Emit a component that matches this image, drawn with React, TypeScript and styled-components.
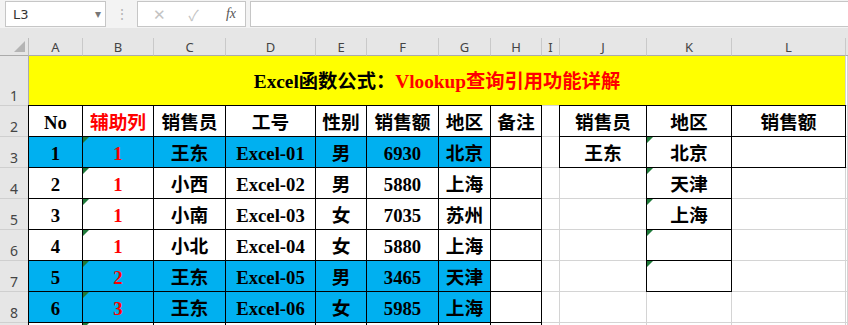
import React from 'react';
import styled, { createGlobalStyle, css } from 'styled-components';

const GlobalStyle = createGlobalStyle`
  html, body {
    margin: 0;
    padding: 0;
    background: #ffffff;
  }
  body {
    font-family: "Noto Sans", "Noto Sans CJK SC", sans-serif;
  }
`;

const COLS = ['A', 'B', 'C', 'D', 'E', 'F', 'G', 'H', 'I', 'J', 'K', 'L', ''];

type Row = {
  no: string;
  aux: string;
  name: string;
  id: string;
  sex: string;
  amount: string;
  area: string;
  blue: boolean;
};

const rows: Row[] = [
  { no: '1', aux: '1', name: '王东', id: 'Excel-01', sex: '男', amount: '6930', area: '北京', blue: true },
  { no: '2', aux: '1', name: '小西', id: 'Excel-02', sex: '男', amount: '5880', area: '上海', blue: false },
  { no: '3', aux: '1', name: '小南', id: 'Excel-03', sex: '女', amount: '7035', area: '苏州', blue: false },
  { no: '4', aux: '1', name: '小北', id: 'Excel-04', sex: '女', amount: '5880', area: '上海', blue: false },
  { no: '5', aux: '2', name: '王东', id: 'Excel-05', sex: '男', amount: '3465', area: '天津', blue: true },
  { no: '6', aux: '3', name: '王东', id: 'Excel-06', sex: '女', amount: '5985', area: '上海', blue: true },
];

// right lookup block, rows 3..9 (index 0 = row 3)
const lookup = [
  { j: '王东', k: '北京', jBox: true, kBox: true, lBox: true },
  { j: '', k: '天津', jBox: false, kBox: true, lBox: false },
  { j: '', k: '上海', jBox: false, kBox: true, lBox: false },
  { j: '', k: '', jBox: false, kBox: true, lBox: false },
  { j: '', k: '', jBox: false, kBox: true, lBox: false },
  { j: '', k: '', jBox: false, kBox: false, lBox: false },
  { j: '', k: '', jBox: false, kBox: false, lBox: false },
];

export default function App() {
  return (
    <>
      <GlobalStyle />
      <Window>
        <FormulaBar>
          <NameBox>
            <span>L3</span>
            <Caret>▾</Caret>
          </NameBox>
          <Dots>⋮</Dots>
          <FxBox>
            <FxButton>✕</FxButton>
            <FxButton>✓</FxButton>
            <FxLabel>fx</FxLabel>
          </FxBox>
          <FormulaInput />
        </FormulaBar>
        <Band />
        <Grid>
          <Corner>
            <CornerMark />
          </Corner>
          {COLS.map((c, i) => (
            <ColHead key={i} $last={i === COLS.length - 1}>
              {c}
            </ColHead>
          ))}

          <RowHead>1</RowHead>
          <TitleCell>
            Excel函数公式：<Red>Vlookup查询引用功能详解</Red>
          </TitleCell>
          <Cell />

          <RowHead>2</RowHead>
          <Cell $boxed>No</Cell>
          <Cell $boxed $red>辅助列</Cell>
          <Cell $boxed>销售员</Cell>
          <Cell $boxed>工号</Cell>
          <Cell $boxed>性别</Cell>
          <Cell $boxed>销售额</Cell>
          <Cell $boxed>地区</Cell>
          <Cell $boxed>备注</Cell>
          <Cell />
          <Cell $boxed>销售员</Cell>
          <Cell $boxed>地区</Cell>
          <Cell $boxed>销售额</Cell>
          <Cell />

          {[...rows, null].map((r, i) => {
            const lk = lookup[i];
            const bg = r && r.blue ? '#00b0f0' : undefined;
            return (
              <React.Fragment key={i}>
                {/* row 9 only peeks in at the bottom, its number stays hidden */}
                <RowHead>{r ? i + 3 : ''}</RowHead>
                <Cell $boxed $bg={bg}>{r?.no}</Cell>
                <Cell $boxed $bg={bg} $red $flag>{r?.aux}</Cell>
                <Cell $boxed $bg={bg}>{r?.name}</Cell>
                <Cell $boxed $bg={bg}>{r?.id}</Cell>
                <Cell $boxed $bg={bg}>{r?.sex}</Cell>
                <Cell $boxed $bg={bg}>{r?.amount}</Cell>
                <Cell $boxed $bg={bg}>{r?.area}</Cell>
                <Cell $boxed />
                <Cell />
                <Cell $boxed={lk.jBox}>{lk.j}</Cell>
                <Cell $boxed={lk.kBox} $flag={lk.kBox}>{lk.k}</Cell>
                <Cell $boxed={lk.lBox} />
                <Cell />
              </React.Fragment>
            );
          })}
        </Grid>
      </Window>
    </>
  );
}

const Window = styled.div`
  width: 848px;
  height: 325px;
  overflow: hidden;
  background: #ffffff;
`;

const FormulaBar = styled.div`
  display: flex;
  align-items: flex-start;
  height: 28px;
  background: #f3f3f3;
`;

const boxStyles = css`
  box-sizing: border-box;
  height: 26px;
  margin-top: 1px;
  background: #ffffff;
  border: 1px solid #c6c6c6;
`;

const NameBox = styled.div`
  ${boxStyles};
  width: 101px;
  margin-left: 5px;
  display: flex;
  align-items: center;
  justify-content: space-between;
  padding: 0 4px 0 7px;
  font-family: "DejaVu Sans", sans-serif;
  font-size: 13px;
  color: #333333;
`;

const Caret = styled.span`
  font-size: 12px;
  color: #777777;
`;

const Dots = styled.div`
  width: 31px;
  text-align: center;
  line-height: 28px;
  font-size: 14px;
  color: #b5b5b5;
`;

const FxBox = styled.div`
  ${boxStyles};
  width: 109px;
  display: flex;
  align-items: center;
  padding: 0 9px 0 13px;
  gap: 17px;
`;

const FxButton = styled.span`
  font-size: 15px;
  color: #c3c3c3;
  width: 17px;
  text-align: center;
`;

const FxLabel = styled.span`
  margin-left: auto;
  font-family: "Liberation Serif", serif;
  font-style: italic;
  font-size: 14px;
  color: #555555;
`;

const FormulaInput = styled.div`
  ${boxStyles};
  flex: 1;
  margin-left: 4px;
  border-right: none;
`;

const Band = styled.div`
  height: 10px;
  background: #e6e6e6;
`;

const Grid = styled.div`
  display: grid;
  grid-template-columns: 29px 54px 71px 72px 90px 51px 72px 52px 51px 18px 87px 85px 114px 1fr;
  grid-template-rows: 18px 50px repeat(8, 31px);
`;

const headStyles = css`
  box-sizing: border-box;
  background: #e6e6e6;
  font-family: "Noto Sans", sans-serif;
  color: #444444;
`;

const Corner = styled.div`
  ${headStyles};
  display: flex;
  align-items: flex-end;
  justify-content: flex-end;
  padding: 0 3px 3px 0;
  border-right: 1px solid #bdbdbd;
  border-bottom: 1px solid #ababab;
`;

const CornerMark = styled.div`
  width: 0;
  height: 0;
  border-left: 11px solid transparent;
  border-bottom: 11px solid #b4b4b4;
`;

const ColHead = styled.div<{ $last?: boolean }>`
  ${headStyles};
  display: flex;
  align-items: center;
  justify-content: center;
  font-size: 13px;
  line-height: 1;
  padding-top: 1px;
  border-right: ${p => (p.$last ? 'none' : '1px solid #c9c9c9')};
  border-bottom: 1px solid #ababab;
`;

const RowHead = styled.div`
  ${headStyles};
  display: flex;
  align-items: flex-end;
  justify-content: center;
  padding-bottom: 2px;
  font-size: 14px;
  line-height: 1;
  border-right: 1px solid #ababab;
  border-bottom: 1px solid #cfcfcf;
`;

const cellText = css`
  font-family: "Liberation Serif", "Noto Sans CJK SC", serif;
  font-weight: 700;
  font-size: 18.7px;
  line-height: 20px;
  color: #000000;
`;

const Cell = styled.div<{ $boxed?: boolean; $bg?: string; $red?: boolean; $flag?: boolean }>`
  ${cellText};
  position: relative;
  box-sizing: border-box;
  display: flex;
  align-items: center;
  justify-content: center;
  padding-top: 3px;
  white-space: nowrap;
  background: ${p => p.$bg ?? '#ffffff'};
  color: ${p => (p.$red ? '#ff0000' : '#000000')};
  border-right: 1px solid ${p => (p.$boxed ? '#000000' : '#d4d4d4')};
  border-bottom: 1px solid ${p => (p.$boxed ? '#000000' : '#d4d4d4')};
  ${p =>
    p.$boxed &&
    css`
      box-shadow: -1px 0 0 #000000, 0 -1px 0 #000000, -1px -1px 0 #000000;
    `}

  &::before {
    content: '';
    display: ${p => (p.$flag ? 'block' : 'none')};
    position: absolute;
    top: 0;
    left: 0;
    width: 0;
    height: 0;
    border-top: 6px solid #1f7a3a;
    border-right: 6px solid transparent;
  }
`;

const TitleCell = styled.div`
  ${cellText};
  font-size: 19.3px;
  grid-column: 2 / 14;
  box-sizing: border-box;
  display: flex;
  align-items: center;
  justify-content: center;
  padding-top: 2px;
  background: #ffff00;
  border-right: 1px solid #d4d4d4;
  border-bottom: 1px solid #d4d4d4;
`;

const Red = styled.span`
  color: #ff0000;
`;
